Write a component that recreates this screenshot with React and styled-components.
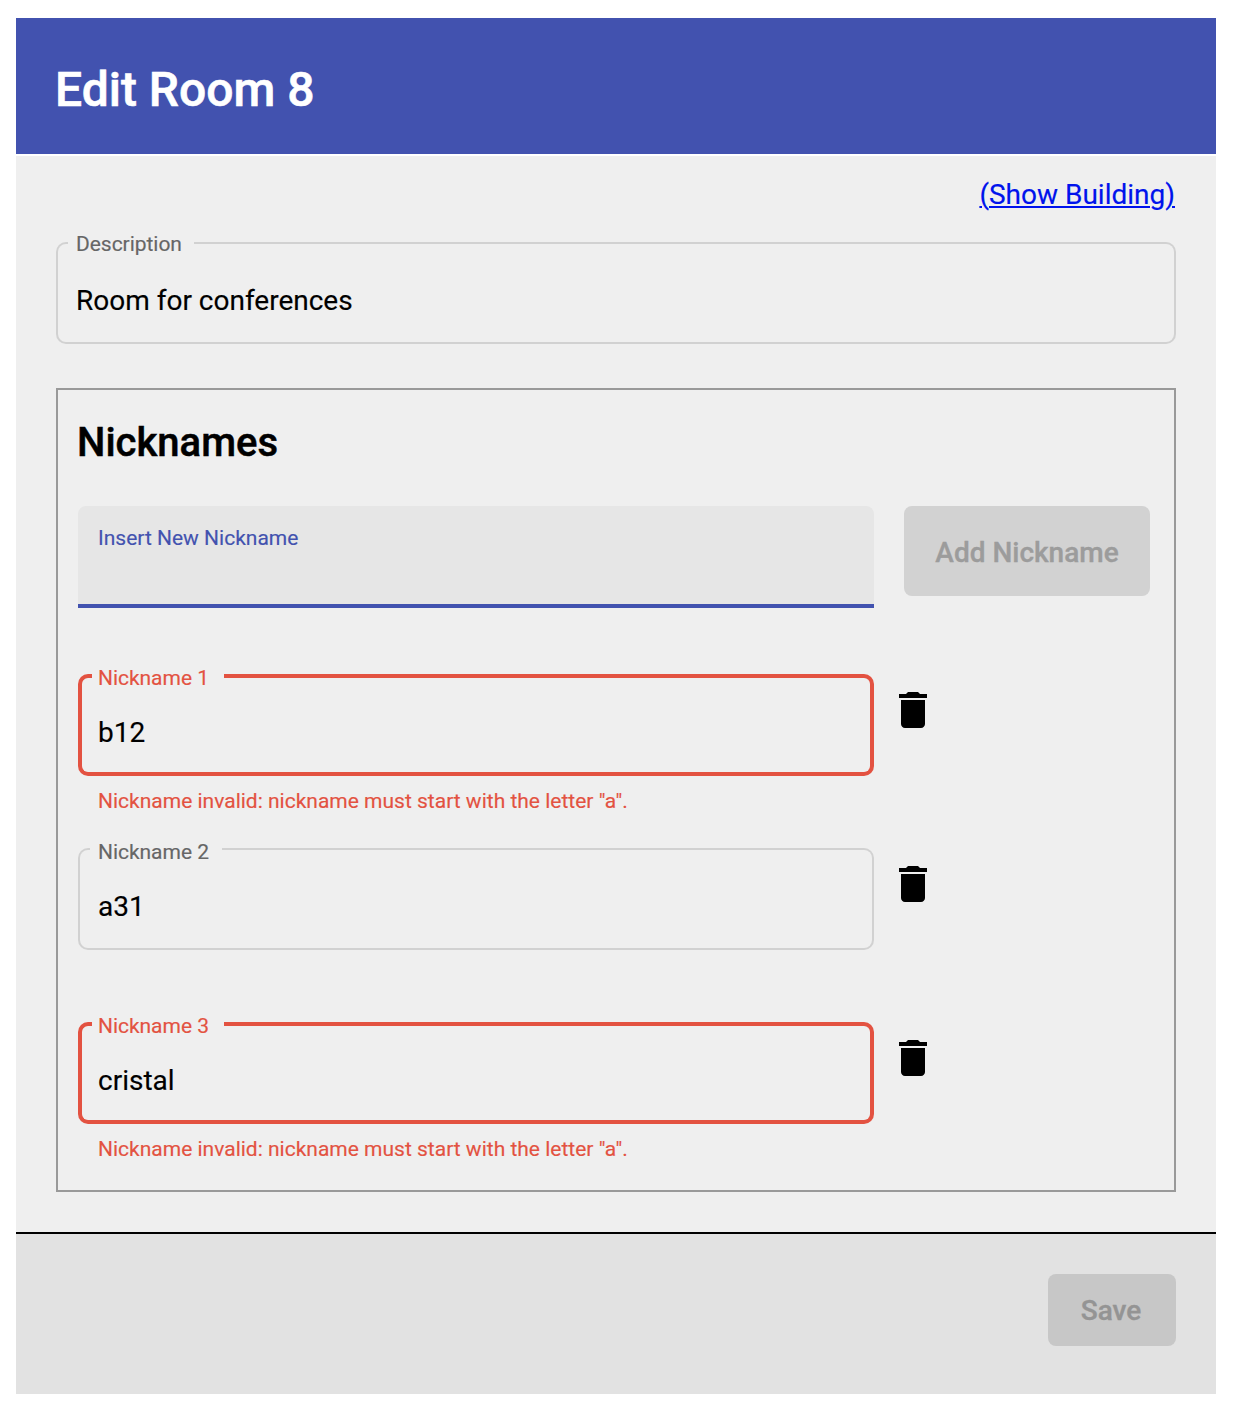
import React from "react";
import styled, { createGlobalStyle } from "styled-components";

const primary = "#4252af";
const danger = "#e35241";

const GlobalStyle = createGlobalStyle`
  * { box-sizing: border-box; }
  body {
    margin: 0;
    background: #fff;
    color: #000;
    font-family: Roboto, "Liberation Sans", sans-serif;
    font-size: 28px;
    -webkit-text-stroke: 0.15px currentColor;
  }
`;

const Dialog = styled.main`
  width: 1200px;
  margin: 18px 0 16px 16px;
  display: flex;
  flex-direction: column;
`;

const Header = styled.header`
  height: 136px;
  padding: 0 40px 0 39px;
  display: flex;
  align-items: center;
  background: ${primary};
  color: #fff;
`;

const Title = styled.h1`
  margin: 0;
  padding-top: 7px;
  font-size: 48px;
  line-height: 56px;
  font-weight: 500;
  -webkit-text-stroke: 0.6px currentColor;
`;

const Content = styled.section`
  margin-top: 2px;
  height: 1076px;
  padding: 21px 40px 40px;
  display: flex;
  flex-direction: column;
  background: #efefef;
`;

const BuildingLink = styled.a`
  align-self: flex-end;
  height: 65px;
  margin-right: 1px;
  line-height: 36px;
  color: #0013ec;
  text-decoration: underline;
  text-decoration-thickness: 2px;
  text-underline-offset: 2px;
`;

const Field = styled.div`
  position: relative;
  height: 102px;
  padding: 42px 20px 0;
  line-height: 34px;
`;

const Outline = styled.div`
  position: absolute;
  inset: 0;
  display: flex;
  --stroke: ${(p) => (p.$invalid ? `4px solid ${danger}` : "2px solid #d1d1d1")};
  color: ${(p) => (p.$invalid ? danger : "#666")};
`;

const OutlineStart = styled.div`
  width: ${(p) => (p.$invalid ? 14 : 12)}px;
  border: var(--stroke);
  border-right: 0;
  border-radius: 10px 0 0 10px;
`;

const OutlineNotch = styled.div`
  width: ${(p) => p.$width}px;
  padding-left: ${(p) => (p.$invalid ? 6 : 8)}px;
  border-bottom: var(--stroke);
`;

const OutlineEnd = styled.div`
  flex: 1;
  border: var(--stroke);
  border-left: 0;
  border-radius: 0 10px 10px 0;
`;

const Label = styled.label`
  display: block;
  margin-top: ${(p) => p.$shift || -10}px;
  font-size: 21px;
  line-height: 24px;
  letter-spacing: -0.04px;
  white-space: nowrap;
`;

const Panel = styled.section`
  margin-top: 44px;
  height: 804px;
  padding: 20px 24px 0 20px;
  border: 2px solid #999;
`;

const PanelTitle = styled.h2`
  margin: 0 0 0 -1px;
  height: 96px;
  padding-top: 9px;
  font-size: 40px;
  line-height: 48px;
  font-weight: 500;
  -webkit-text-stroke: 0.5px currentColor;
`;

const AddRow = styled.div`
  display: flex;
  justify-content: space-between;
  align-items: flex-start;
  height: 168px;
`;

const NewField = styled.div`
  width: 796px;
  height: 102px;
  padding: 20px 20px 0;
  background: #e6e6e6;
  border-bottom: 4px solid ${primary};
  border-radius: 8px 8px 0 0;
  color: ${primary};
  font-size: 21px;
  line-height: 24px;
`;

const Button = styled.button`
  width: ${(p) => p.$width}px;
  height: ${(p) => p.$height}px;
  padding: ${(p) => p.$padding};
  border: 0;
  border-radius: 8px;
  background: ${(p) => p.$bg};
  color: ${(p) => p.$color};
  font: 500 28px/36px Roboto, "Liberation Sans", sans-serif;
  -webkit-text-stroke: 0.35px currentColor;
`;

const NicknameRow = styled.div`
  display: flex;
  height: 174px;
`;

const FieldColumn = styled.div`
  width: 796px;
`;

const ErrorText = styled.p`
  margin: 13px 20px 0;
  color: ${danger};
  font-size: 21px;
  line-height: 24px;
`;

const DeleteIcon = styled.svg`
  display: block;
  width: 48px;
  height: 48px;
  margin: 12px 0 0 15px;
`;

const Footer = styled.footer`
  height: 162px;
  padding: 40px;
  display: flex;
  justify-content: flex-end;
  background: #e2e2e2;
  border-top: 2px solid #000;
`;

const nicknames = [
  { label: "Nickname 1", value: "b12", invalid: true },
  { label: "Nickname 2", value: "a31", invalid: false },
  { label: "Nickname 3", value: "cristal", invalid: true },
];

function OutlinedField({ label, value, invalid, notch, shift }) {
  return (
    <Field>
      <Outline $invalid={invalid}>
        <OutlineStart $invalid={invalid} />
        <OutlineNotch $invalid={invalid} $width={notch}>
          <Label $shift={shift}>{label}</Label>
        </OutlineNotch>
        <OutlineEnd />
      </Outline>
      {value}
    </Field>
  );
}

function Nickname({ label, value, invalid }) {
  return (
    <NicknameRow>
      <FieldColumn>
        <OutlinedField label={label} value={value} invalid={invalid} notch={132} shift={-8} />
        {invalid && (
          <ErrorText>Nickname invalid: nickname must start with the letter "a".</ErrorText>
        )}
      </FieldColumn>
      <DeleteIcon viewBox="0 0 24 24" strokeWidth="0" aria-label="Delete">
        <path d="M6 19c0 1.1.9 2 2 2h8c1.1 0 2-.9 2-2V7H6v12zM19 4h-3.5l-1-1h-5l-1 1H5v2h14V4z" />
      </DeleteIcon>
    </NicknameRow>
  );
}

export default function App() {
  return (
    <>
      <GlobalStyle />
      <Dialog>
        <Header>
          <Title>Edit Room 8</Title>
        </Header>
        <Content>
          <BuildingLink href="#">(Show Building)</BuildingLink>
          <OutlinedField label="Description" value="Room for conferences" notch={126} />
          <Panel>
            <PanelTitle>Nicknames</PanelTitle>
            <AddRow>
              <NewField>Insert New Nickname</NewField>
              <Button
                $width={246}
                $height={90}
                $padding="4px 0 0"
                $bg="#d2d2d2"
                $color="#9c9c9c"
                disabled
              >
                Add Nickname
              </Button>
            </AddRow>
            {nicknames.map((n) => (
              <Nickname key={n.label} {...n} />
            ))}
          </Panel>
        </Content>
        <Footer>
          <Button
            $width={128}
            $height={72}
            $padding="2px 2px 0 0"
            $bg="#c7c7c7"
            $color="#949494"
            disabled
          >
            Save
          </Button>
        </Footer>
      </Dialog>
    </>
  );
}
